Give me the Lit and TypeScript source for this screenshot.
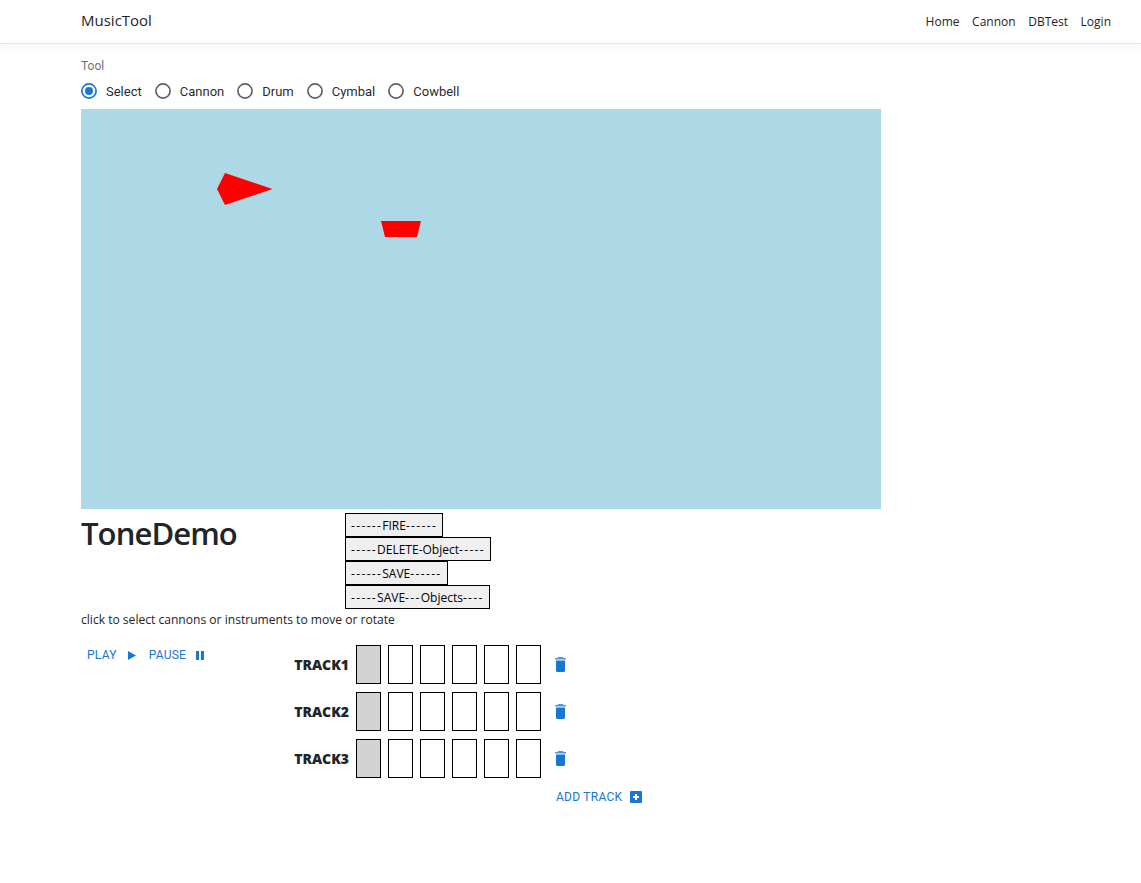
import { LitElement, html, svg, css } from "lit";
import { customElement } from "lit/decorators.js";

const TOOLS = ["Select", "Cannon", "Drum", "Cymbal", "Cowbell"];
const NAV = ["Home", "Cannon", "DBTest", "Login"];
const ACTIONS = ["------FIRE------", "-----DELETE-Object-----", "------SAVE------", "-----SAVE---Objects----"];
const TRACKS = ["TRACK1", "TRACK2", "TRACK3"];
const STEPS = [0, 1, 2, 3, 4, 5];

@customElement("app-root")
export class AppRoot extends LitElement {
  static styles = css`
    :host {
      display: block;
      min-height: 883px;
      background: #fff;
      color: #212529;
      font-family: "Open Sans", "Noto Sans", sans-serif;
    }
    .navbar {
      display: flex;
      align-items: center;
      justify-content: space-between;
      height: 43px;
      padding: 0 30px 0 81px;
      border-bottom: 1px solid #e5e5e5;
      box-shadow: 0 4px 8px rgba(0, 0, 0, 0.04);
      box-sizing: content-box;
    }
    .brand {
      font-size: 15px;
      color: #212529;
      margin-top: -3px;
    }
    .nav {
      display: flex;
      gap: 12.6px;
      font-size: 12px;
      margin-top: -1px;
    }
    .main {
      width: 800px;
      margin-left: 81px;
    }
    .tool-label {
      font-family: Roboto, sans-serif;
      font-size: 12px;
      line-height: 14px;
      color: rgba(0, 0, 0, 0.6);
      padding-top: 15px;
    }
    .radios {
      display: flex;
      height: 24px;
      margin-top: 6px;
      align-items: center;
      font-family: Roboto, sans-serif;
      font-size: 13px;
      color: rgba(0, 0, 0, 0.87);
    }
    .radio {
      display: flex;
      align-items: center;
      gap: 9px;
      margin-right: 13px;
    }
    .radio svg {
      width: 16px;
      height: 16px;
      display: block;
    }
    .stage {
      display: block;
      width: 800px;
      height: 400px;
      background: lightblue;
      margin-top: 6px;
    }
    .heading {
      display: flex;
      align-items: flex-start;
      margin-top: 4px;
    }
    h1 {
      width: 264px;
      margin: 0;
      font-size: 31px;
      letter-spacing: -0.9px;
      line-height: 40px;
      font-weight: 600;
    }
    .actions {
      display: flex;
      flex-direction: column;
      align-items: flex-start;
    }
    .actions button {
      height: 24px;
      padding: 0 5px;
      border: 1px solid #000;
      background: #efefef;
      color: #000;
      font-family: "Open Sans", sans-serif;
      font-size: 12px;
      box-sizing: border-box;
    }
    .dashes {
      letter-spacing: 1.35px;
    }
    .hint {
      font-size: 12.08px;
      line-height: 20px;
      padding-top: 1px;
    }
    .sequencer {
      display: flex;
      margin-top: 14px;
    }
    .transport {
      display: flex;
      align-items: center;
      width: 199px;
      height: 22px;
      padding-left: 6px;
      box-sizing: border-box;
      flex: none;
    }
    .text-btn {
      display: inline-flex;
      align-items: center;
      font-family: Roboto, sans-serif;
      font-size: 12px;
      letter-spacing: 0.25px;
      color: #1976d2;
    }
    .text-btn svg {
      display: block;
      fill: #1976d2;
    }
    .play svg {
      margin: 0 13px 0 11px;
    }
    .pause svg {
      margin-left: 10px;
    }
    .tracks {
      display: flex;
      flex-direction: column;
      gap: 7px;
    }
    .track {
      display: flex;
      align-items: center;
      height: 40px;
    }
    .track-name {
      width: 69px;
      margin-right: 7px;
      text-align: right;
      font-size: 14px;
      font-weight: 800;
    }
    .step {
      width: 25px;
      height: 39px;
      margin-right: 7px;
      border: 1px solid #000;
      box-sizing: border-box;
    }
    .step.on {
      background: lightgray;
    }
    .trash {
      display: block;
      margin-left: 7px;
      fill: #1976d2;
    }
    .add {
      margin: 12px 0 0 276px;
    }
    .add svg {
      margin-left: 8px;
    }
  `;

  private radio(label: string, checked: boolean) {
    const color = checked ? "#1976d2" : "#616161";
    return html`<label class="radio">
      <svg viewBox="0 0 16 16">
        <circle cx="8" cy="8" r="7.1" fill="none" stroke=${color} stroke-width="1.7"></circle>
        ${checked ? svg`<circle cx="8" cy="8" r="4" fill=${color}></circle>` : ""}
      </svg>
      ${label}
    </label>`;
  }

  // the hyphen runs are set wider than the words, as in the reference font
  private actionLabel(text: string) {
    return text.split(/(-{2,})/).map((part) =>
      part.startsWith("--") ? html`<span class="dashes">${part}</span>` : part
    );
  }

  render() {
    return html`
      <nav class="navbar">
        <span class="brand">MusicTool</span>
        <div class="nav">${NAV.map((n) => html`<span>${n}</span>`)}</div>
      </nav>
      <main class="main">
        <div class="tool-label">Tool</div>
        <div class="radios">${TOOLS.map((t, i) => this.radio(t, i === 0))}</div>
        <svg class="stage" viewBox="0 0 800 400">
          <polygon points="144,64 191.5,80 144,96 136,80" fill="#f00"></polygon>
          <polygon points="300,112 340,112 336,128 304,128" fill="#f00"></polygon>
        </svg>
        <div class="heading">
          <h1>ToneDemo</h1>
          <div class="actions">${ACTIONS.map((a) => html`<button>${this.actionLabel(a)}</button>`)}</div>
        </div>
        <div class="hint">click to select cannons or instruments to move or rotate</div>
        <div class="sequencer">
          <div class="transport">
            <span class="text-btn play">PLAY
              <svg width="8" height="9" viewBox="0 0 8 9"><path d="M0 0 8 4.5 0 9z"></path></svg>
            </span>
            <span class="text-btn pause">PAUSE
              <svg width="8" height="9" viewBox="0 0 8 9"><path d="M0 0h3v9H0zM5 0h3v9H5z"></path></svg>
            </span>
          </div>
          <div>
            <div class="tracks">
              ${TRACKS.map(
                (t) => html`<div class="track">
                  <span class="track-name">${t}</span>
                  ${STEPS.map((s) => html`<div class="step ${s === 0 ? "on" : ""}"></div>`)}
                  <svg class="trash" width="11" height="15" viewBox="0 0 11 15">
                    <path d="M3 0h5l.6 1H11v1.4H0V1h2.4z" opacity=".75"></path>
                    <path d="M1 3.6h9v9.9c0 .8-.7 1.5-1.5 1.5h-6C1.7 15 1 14.3 1 13.5z"></path>
                  </svg>
                </div>`
              )}
            </div>
            <div class="text-btn add">ADD TRACK
              <svg width="12" height="12" viewBox="0 0 12 12">
                <path fill-rule="evenodd" d="M1 0h10a1 1 0 0 1 1 1v10a1 1 0 0 1-1 1H1a1 1 0 0 1-1-1V1a1 1 0 0 1 1-1zM5 3v2H3v2h2v2h2V7h2V5H7V3z"></path>
              </svg>
            </div>
          </div>
        </div>
      </main>
    `;
  }
}
